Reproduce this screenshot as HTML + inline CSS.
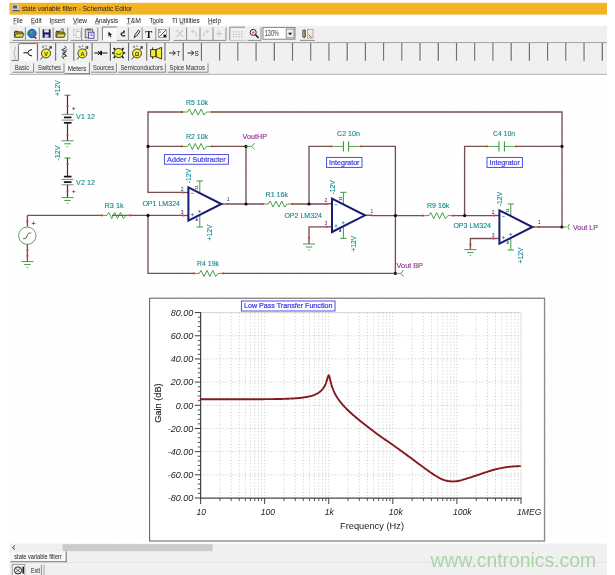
<!DOCTYPE html>
<html><head><meta charset="utf-8"><title>state variable filterr - Schematic Editor</title>
<style>
html,body{margin:0;padding:0;background:#fff;}
body{width:615px;height:575px;overflow:hidden;font-family:"Liberation Sans",sans-serif;}
svg{display:block;position:absolute;left:0;top:0;will-change:transform;transform:translateZ(0);filter:blur(0.35px);}
</style></head><body>
<svg width="615" height="575" viewBox="0 0 615 575" font-family="'Liberation Sans', sans-serif">
<g id="chrome">
<rect x="9.5" y="2.8" width="597.5" height="11.8" fill="#f4b325" stroke="none" stroke-width="1" />
<rect x="12" y="4.5" width="7" height="6.5" fill="#cfcfc4" stroke="none" stroke-width="1" />
<rect x="13" y="5.5" width="4" height="3" fill="#4a5a7a" stroke="none" stroke-width="1" />
<rect x="12.5" y="10" width="7" height="1.2" fill="#555" stroke="none" stroke-width="1" />
<text x="22" y="10.8" font-size="8" fill="#2a2210" stroke="#2a2210" stroke-width="0" textLength="110" lengthAdjust="spacingAndGlyphs">state variable filterr - Schematic Editor</text>
<text x="13.2" y="22.7" font-size="7.6" fill="#141414" stroke="#141414" stroke-width="0" textLength="9.8" lengthAdjust="spacingAndGlyphs">File</text>
<text x="31" y="22.7" font-size="7.6" fill="#141414" stroke="#141414" stroke-width="0" textLength="10.6" lengthAdjust="spacingAndGlyphs">Edit</text>
<text x="49.6" y="22.7" font-size="7.6" fill="#141414" stroke="#141414" stroke-width="0" textLength="15.4" lengthAdjust="spacingAndGlyphs">Insert</text>
<text x="73" y="22.7" font-size="7.6" fill="#141414" stroke="#141414" stroke-width="0" textLength="14" lengthAdjust="spacingAndGlyphs">View</text>
<text x="95" y="22.7" font-size="7.6" fill="#141414" stroke="#141414" stroke-width="0" textLength="23" lengthAdjust="spacingAndGlyphs">Analysis</text>
<text x="126.6" y="22.7" font-size="7.6" fill="#141414" stroke="#141414" stroke-width="0" textLength="14.4" lengthAdjust="spacingAndGlyphs">T&amp;M</text>
<text x="149.4" y="22.7" font-size="7.6" fill="#141414" stroke="#141414" stroke-width="0" textLength="14.2" lengthAdjust="spacingAndGlyphs">Tools</text>
<text x="172" y="22.7" font-size="7.6" fill="#141414" stroke="#141414" stroke-width="0" textLength="27.6" lengthAdjust="spacingAndGlyphs">TI Utilities</text>
<text x="208" y="22.7" font-size="7.6" fill="#141414" stroke="#141414" stroke-width="0" textLength="13" lengthAdjust="spacingAndGlyphs">Help</text>
<line x1="13.2" y1="23.9" x2="16.6" y2="23.9" stroke="#444" stroke-width="0.6" />
<line x1="31" y1="23.9" x2="35" y2="23.9" stroke="#444" stroke-width="0.6" />
<line x1="50.5" y1="23.9" x2="53.8" y2="23.9" stroke="#444" stroke-width="0.6" />
<line x1="73" y1="23.9" x2="77" y2="23.9" stroke="#444" stroke-width="0.6" />
<line x1="95" y1="23.9" x2="99.5" y2="23.9" stroke="#444" stroke-width="0.6" />
<line x1="126.6" y1="23.9" x2="130.6" y2="23.9" stroke="#444" stroke-width="0.6" />
<line x1="152.6" y1="23.9" x2="156.4" y2="23.9" stroke="#444" stroke-width="0.6" />
<line x1="180" y1="23.9" x2="184.6" y2="23.9" stroke="#444" stroke-width="0.6" />
<line x1="208" y1="23.9" x2="212.6" y2="23.9" stroke="#444" stroke-width="0.6" />
<rect x="9.5" y="25.8" width="597.5" height="16.8" fill="#f0f0f0" stroke="none" stroke-width="1" />
<rect x="9.5" y="42.4" width="597.5" height="32" fill="#f0f0f0" stroke="none" stroke-width="1" />
<line x1="9.5" y1="42.6" x2="607" y2="42.6" stroke="#a2a2a2" stroke-width="1" />
</g>
<g id="tb1">
<line x1="25.4" y1="27.5" x2="25.4" y2="40.4" stroke="#8c8c8c" stroke-width="1" />
<line x1="12.5" y1="40.4" x2="25.4" y2="40.4" stroke="#8c8c8c" stroke-width="1" />
<line x1="39.3" y1="27.5" x2="39.3" y2="40.4" stroke="#8c8c8c" stroke-width="1" />
<line x1="25.4" y1="40.4" x2="39.3" y2="40.4" stroke="#8c8c8c" stroke-width="1" />
<line x1="53.2" y1="27.5" x2="53.2" y2="40.4" stroke="#8c8c8c" stroke-width="1" />
<line x1="39.3" y1="40.4" x2="53.2" y2="40.4" stroke="#8c8c8c" stroke-width="1" />
<line x1="67.8" y1="27.5" x2="67.8" y2="40.4" stroke="#8c8c8c" stroke-width="1" />
<line x1="53.2" y1="40.4" x2="67.8" y2="40.4" stroke="#8c8c8c" stroke-width="1" />
<path d="M14.5,30.8 h3 l1,1 h4 v1 h-8z" fill="#6b5a10"/>
<path d="M14.5,32.0 h8.2 v5 h-8.2z" fill="#b8b038" stroke="#2a2a10" stroke-width="0.8"/>
<path d="M16.0,33.8 h8 l-1.5,3.4 h-8z" fill="#dcd860" stroke="#2a2a10" stroke-width="0.7"/>
<circle cx="32" cy="33.5" r="4.2" fill="#2a7ad0" stroke="#123a6a" stroke-width="0.8"/>
<path d="M29.5,31.5 q2,-1.5 3.5,0 q-0.5,2 -2.5,2.5z" fill="#3ab03a"/>
<path d="M33.5,36 l2.8,2.6" stroke="#c02020" stroke-width="1.6"/>
<rect x="42.6" y="29.4" width="8" height="8.4" fill="#18186a" stroke="none" stroke-width="1" />
<rect x="44.2" y="29.4" width="4.6" height="3" fill="#e8e8f4" stroke="none" stroke-width="1" />
<rect x="44.6" y="34.4" width="4" height="3.4" fill="#c8c8d8" stroke="none" stroke-width="1" />
<path d="M56,30.8 h3 l1,1 h4 v1 h-8z" fill="#6b5a10"/>
<path d="M56,32.0 h8.2 v5 h-8.2z" fill="#b8b038" stroke="#2a2a10" stroke-width="0.8"/>
<path d="M57.5,33.8 h8 l-1.5,3.4 h-8z" fill="#dcd860" stroke="#2a2a10" stroke-width="0.7"/>
<path d="M60,30.5 l3,-2 l0.5,2.5" fill="none" stroke="#333" stroke-width="0.7"/>
<line x1="81.7" y1="27.5" x2="81.7" y2="40.4" stroke="#8c8c8c" stroke-width="1" />
<line x1="70.5" y1="40.4" x2="81.7" y2="40.4" stroke="#8c8c8c" stroke-width="1" />
<line x1="97.8" y1="27.5" x2="97.8" y2="40.4" stroke="#8c8c8c" stroke-width="1" />
<line x1="81.7" y1="40.4" x2="97.8" y2="40.4" stroke="#8c8c8c" stroke-width="1" />
<rect x="73.5" y="29.5" width="4.5" height="6" fill="#f4f4f4" stroke="#bdbdbd" stroke-width="0.7" />
<rect x="76" y="31.5" width="4.5" height="6" fill="#f4f4f4" stroke="#bdbdbd" stroke-width="0.7" />
<rect x="85.2" y="29.2" width="7.5" height="8.6" fill="#d8d8c8" stroke="#555" stroke-width="0.8" />
<rect x="87" y="28.6" width="3.6" height="1.8" fill="#666" stroke="none" stroke-width="1" />
<rect x="88.6" y="32.2" width="5.4" height="6" fill="#fff" stroke="#2a2a9a" stroke-width="0.8" />
<line x1="89.8" y1="34" x2="92.8" y2="34" stroke="#2a2a9a" stroke-width="0.6" />
<line x1="89.8" y1="35.6" x2="92.8" y2="35.6" stroke="#2a2a9a" stroke-width="0.6" />
<rect x="102.4" y="27" width="14.199999999999989" height="13.4" fill="#f9f9f9" stroke="none" stroke-width="1" />
<path d="M102.4,40.4 V27 H116.6" fill="none" stroke="#7a7a7a" stroke-width="1"/>
<path d="M108.4,31.4 v5 l1.2,-1.1 l1,2.1 l0.8,-0.4 l-1,-2 h1.7z" fill="#111"/>
<line x1="128.4" y1="27.5" x2="128.4" y2="40.4" stroke="#8c8c8c" stroke-width="1" />
<line x1="116.6" y1="40.4" x2="128.4" y2="40.4" stroke="#8c8c8c" stroke-width="1" />
<line x1="142.2" y1="27.5" x2="142.2" y2="40.4" stroke="#8c8c8c" stroke-width="1" />
<line x1="128.4" y1="40.4" x2="142.2" y2="40.4" stroke="#8c8c8c" stroke-width="1" />
<line x1="155.8" y1="27.5" x2="155.8" y2="40.4" stroke="#8c8c8c" stroke-width="1" />
<line x1="142.2" y1="40.4" x2="155.8" y2="40.4" stroke="#8c8c8c" stroke-width="1" />
<line x1="169.4" y1="27.5" x2="169.4" y2="40.4" stroke="#8c8c8c" stroke-width="1" />
<line x1="155.8" y1="40.4" x2="169.4" y2="40.4" stroke="#8c8c8c" stroke-width="1" />
<path d="M124.8,30.8 l-1.6,1 M124.6,32.8 q-4,-0.4 -3.4,1.8 q0.8,2 4,1" fill="none" stroke="#111" stroke-width="1.2"/>
<path d="M134.2,37.6 l0.8,-2.8 l3.4,-4.6 l1.6,1.2 l-3.4,4.6z" fill="#fff" stroke="#111" stroke-width="0.9"/>
<text x="145.2" y="38" font-size="10.5" fill="#111" stroke="#111" stroke-width="0" font-weight="bold" font-family="Liberation Serif, serif">T</text>
<rect x="158.4" y="29.4" width="8.2" height="8.2" fill="#fdfdfd" stroke="#777" stroke-width="0.6" />
<line x1="159.4" y1="36.8" x2="165.8" y2="30.2" stroke="#222" stroke-width="0.8" />
<text x="158.8" y="33.4" font-size="4.2" fill="#111" stroke="#111" stroke-width="0">1</text>
<rect x="163.4" y="34.6" width="2.6" height="2.6" fill="#111" stroke="none" stroke-width="1" />
<line x1="186.6" y1="27.5" x2="186.6" y2="40.4" stroke="#8c8c8c" stroke-width="1" />
<line x1="173.5" y1="40.4" x2="186.6" y2="40.4" stroke="#8c8c8c" stroke-width="1" />
<line x1="200" y1="27.5" x2="200" y2="40.4" stroke="#8c8c8c" stroke-width="1" />
<line x1="186.6" y1="40.4" x2="200" y2="40.4" stroke="#8c8c8c" stroke-width="1" />
<line x1="213" y1="27.5" x2="213" y2="40.4" stroke="#8c8c8c" stroke-width="1" />
<line x1="200" y1="40.4" x2="213" y2="40.4" stroke="#8c8c8c" stroke-width="1" />
<line x1="226" y1="27.5" x2="226" y2="40.4" stroke="#8c8c8c" stroke-width="1" />
<line x1="213" y1="40.4" x2="226" y2="40.4" stroke="#8c8c8c" stroke-width="1" />
<path d="M176.5,30 l6.5,7 M183,30 l-6.5,7" stroke="#cfcfcf" stroke-width="1.3" fill="none"/>
<path d="M196.4,37 v-3 q-0.6,-3 -4.4,-2.6 M193.4,30 l-2,1.4 l2,1.6" stroke="#cacaca" stroke-width="1" fill="none"/>
<path d="M203.8,37 v-3 q0.6,-3 4.4,-2.6 M206.8,30 l2,1.4 l-2,1.6" stroke="#cacaca" stroke-width="1" fill="none"/>
<path d="M216,33.6 h6.4 M219.2,30.4 v6.4" stroke="#cacaca" stroke-width="1.1" fill="none"/>
<path d="M229.8,40.4 V27.2 H245" fill="none" stroke="#8a8a8a" stroke-width="1"/>
<line x1="229.8" y1="40.4" x2="246" y2="40.4" stroke="#b8b8b8" stroke-width="0.8" />
<rect x="233" y="31.4" width="1" height="1" fill="#9a9a9a" stroke="none" stroke-width="1" />
<rect x="233" y="33.8" width="1" height="1" fill="#9a9a9a" stroke="none" stroke-width="1" />
<rect x="233" y="36.2" width="1" height="1" fill="#9a9a9a" stroke="none" stroke-width="1" />
<rect x="235.8" y="31.4" width="1" height="1" fill="#9a9a9a" stroke="none" stroke-width="1" />
<rect x="235.8" y="33.8" width="1" height="1" fill="#9a9a9a" stroke="none" stroke-width="1" />
<rect x="235.8" y="36.2" width="1" height="1" fill="#9a9a9a" stroke="none" stroke-width="1" />
<rect x="238.6" y="31.4" width="1" height="1" fill="#9a9a9a" stroke="none" stroke-width="1" />
<rect x="238.6" y="33.8" width="1" height="1" fill="#9a9a9a" stroke="none" stroke-width="1" />
<rect x="238.6" y="36.2" width="1" height="1" fill="#9a9a9a" stroke="none" stroke-width="1" />
<rect x="241.4" y="31.4" width="1" height="1" fill="#9a9a9a" stroke="none" stroke-width="1" />
<rect x="241.4" y="33.8" width="1" height="1" fill="#9a9a9a" stroke="none" stroke-width="1" />
<rect x="241.4" y="36.2" width="1" height="1" fill="#9a9a9a" stroke="none" stroke-width="1" />
<line x1="261" y1="27.5" x2="261" y2="40.4" stroke="#8c8c8c" stroke-width="1" />
<line x1="247.5" y1="40.4" x2="261" y2="40.4" stroke="#8c8c8c" stroke-width="1" />
<circle cx="253.2" cy="32.4" r="3" fill="#fff" stroke="#222" stroke-width="1"/>
<circle cx="253.2" cy="32.4" r="1.2" fill="#e0407a"/>
<line x1="255.4" y1="34.6" x2="258.6" y2="38" stroke="#222" stroke-width="1.6" />
<rect x="263" y="27.4" width="32" height="11.8" fill="#fff" stroke="#7a7a7a" stroke-width="0.9" />
<text x="264.8" y="36.4" font-size="8.2" fill="#3a3a3a" stroke="#3a3a3a" stroke-width="0" textLength="14" lengthAdjust="spacingAndGlyphs">130%</text>
<rect x="286.2" y="29" width="7.8" height="9" fill="#ececec" stroke="#777" stroke-width="0.8" />
<path d="M288.1,32.8 h4 l-2,2.4z" fill="#111"/>
<rect x="302.8" y="30.4" width="2.8" height="6.6" fill="#d0d060" stroke="#444" stroke-width="0.7" />
<line x1="304.2" y1="29" x2="304.2" y2="38.6" stroke="#444" stroke-width="0.7" />
<rect x="307.4" y="29.4" width="5.6" height="8.6" fill="#ececec" stroke="#888" stroke-width="0.6" />
<path d="M308.6,34.6 l3,3" stroke="#c03030" stroke-width="0.9"/>
<line x1="300" y1="40.4" x2="315" y2="40.4" stroke="#8c8c8c" stroke-width="1" />
</g>
<g id="tb2">
<path d="M15.4,46.5 q-2.6,6.5 0,13" fill="none" stroke="#b0b0b0" stroke-width="0.9"/>
<rect x="19" y="43.4" width="18" height="17.4" fill="#fbfbfb" stroke="none" stroke-width="1" />
<path d="M11.6,60.4 h6.8 V45.6 q0,-2 2,-2 h16" fill="none" stroke="#707070" stroke-width="1"/>
<line x1="37.52" y1="43" x2="37.52" y2="60.8" stroke="#6e6e6e" stroke-width="1.3" />
<line x1="38.62" y1="43.6" x2="38.62" y2="60.8" stroke="#fafafa" stroke-width="0.7" />
<line x1="55.74" y1="43" x2="55.74" y2="60.8" stroke="#6e6e6e" stroke-width="1.3" />
<line x1="56.84" y1="43.6" x2="56.84" y2="60.8" stroke="#fafafa" stroke-width="0.7" />
<line x1="73.96" y1="43" x2="73.96" y2="60.8" stroke="#6e6e6e" stroke-width="1.3" />
<line x1="75.06" y1="43.6" x2="75.06" y2="60.8" stroke="#fafafa" stroke-width="0.7" />
<line x1="92.18" y1="43" x2="92.18" y2="60.8" stroke="#6e6e6e" stroke-width="1.3" />
<line x1="93.28" y1="43.6" x2="93.28" y2="60.8" stroke="#fafafa" stroke-width="0.7" />
<line x1="110.4" y1="43" x2="110.4" y2="60.8" stroke="#6e6e6e" stroke-width="1.3" />
<line x1="111.5" y1="43.6" x2="111.5" y2="60.8" stroke="#fafafa" stroke-width="0.7" />
<line x1="128.62" y1="43" x2="128.62" y2="60.8" stroke="#6e6e6e" stroke-width="1.3" />
<line x1="129.72" y1="43.6" x2="129.72" y2="60.8" stroke="#fafafa" stroke-width="0.7" />
<line x1="146.84" y1="43" x2="146.84" y2="60.8" stroke="#6e6e6e" stroke-width="1.3" />
<line x1="147.94" y1="43.6" x2="147.94" y2="60.8" stroke="#fafafa" stroke-width="0.7" />
<line x1="165.06" y1="43" x2="165.06" y2="60.8" stroke="#6e6e6e" stroke-width="1.3" />
<line x1="166.16" y1="43.6" x2="166.16" y2="60.8" stroke="#fafafa" stroke-width="0.7" />
<line x1="183.28" y1="43" x2="183.28" y2="60.8" stroke="#6e6e6e" stroke-width="1.3" />
<line x1="184.38" y1="43.6" x2="184.38" y2="60.8" stroke="#fafafa" stroke-width="0.7" />
<line x1="201.5" y1="43" x2="201.5" y2="60.8" stroke="#6e6e6e" stroke-width="1.3" />
<line x1="202.6" y1="43.6" x2="202.6" y2="60.8" stroke="#fafafa" stroke-width="0.7" />
<line x1="219.72" y1="43" x2="219.72" y2="60.8" stroke="#6e6e6e" stroke-width="1.3" />
<line x1="220.82" y1="43.6" x2="220.82" y2="60.8" stroke="#fafafa" stroke-width="0.7" />
<line x1="237.94" y1="43" x2="237.94" y2="60.8" stroke="#6e6e6e" stroke-width="1.3" />
<line x1="239.04" y1="43.6" x2="239.04" y2="60.8" stroke="#fafafa" stroke-width="0.7" />
<line x1="256.16" y1="43" x2="256.16" y2="60.8" stroke="#6e6e6e" stroke-width="1.3" />
<line x1="257.26" y1="43.6" x2="257.26" y2="60.8" stroke="#fafafa" stroke-width="0.7" />
<line x1="274.38" y1="43" x2="274.38" y2="60.8" stroke="#6e6e6e" stroke-width="1.3" />
<line x1="275.48" y1="43.6" x2="275.48" y2="60.8" stroke="#fafafa" stroke-width="0.7" />
<line x1="292.6" y1="43" x2="292.6" y2="60.8" stroke="#6e6e6e" stroke-width="1.3" />
<line x1="293.7" y1="43.6" x2="293.7" y2="60.8" stroke="#fafafa" stroke-width="0.7" />
<line x1="310.82" y1="43" x2="310.82" y2="60.8" stroke="#6e6e6e" stroke-width="1.3" />
<line x1="311.92" y1="43.6" x2="311.92" y2="60.8" stroke="#fafafa" stroke-width="0.7" />
<line x1="329.04" y1="43" x2="329.04" y2="60.8" stroke="#6e6e6e" stroke-width="1.3" />
<line x1="330.14" y1="43.6" x2="330.14" y2="60.8" stroke="#fafafa" stroke-width="0.7" />
<line x1="347.26" y1="43" x2="347.26" y2="60.8" stroke="#6e6e6e" stroke-width="1.3" />
<line x1="348.36" y1="43.6" x2="348.36" y2="60.8" stroke="#fafafa" stroke-width="0.7" />
<line x1="365.48" y1="43" x2="365.48" y2="60.8" stroke="#6e6e6e" stroke-width="1.3" />
<line x1="366.58" y1="43.6" x2="366.58" y2="60.8" stroke="#fafafa" stroke-width="0.7" />
<line x1="383.7" y1="43" x2="383.7" y2="60.8" stroke="#6e6e6e" stroke-width="1.3" />
<line x1="384.8" y1="43.6" x2="384.8" y2="60.8" stroke="#fafafa" stroke-width="0.7" />
<line x1="401.92" y1="43" x2="401.92" y2="60.8" stroke="#6e6e6e" stroke-width="1.3" />
<line x1="403.02" y1="43.6" x2="403.02" y2="60.8" stroke="#fafafa" stroke-width="0.7" />
<line x1="420.14" y1="43" x2="420.14" y2="60.8" stroke="#6e6e6e" stroke-width="1.3" />
<line x1="421.24" y1="43.6" x2="421.24" y2="60.8" stroke="#fafafa" stroke-width="0.7" />
<line x1="438.36" y1="43" x2="438.36" y2="60.8" stroke="#6e6e6e" stroke-width="1.3" />
<line x1="439.46" y1="43.6" x2="439.46" y2="60.8" stroke="#fafafa" stroke-width="0.7" />
<line x1="456.58" y1="43" x2="456.58" y2="60.8" stroke="#6e6e6e" stroke-width="1.3" />
<line x1="457.68" y1="43.6" x2="457.68" y2="60.8" stroke="#fafafa" stroke-width="0.7" />
<line x1="474.8" y1="43" x2="474.8" y2="60.8" stroke="#6e6e6e" stroke-width="1.3" />
<line x1="475.9" y1="43.6" x2="475.9" y2="60.8" stroke="#fafafa" stroke-width="0.7" />
<line x1="493.02" y1="43" x2="493.02" y2="60.8" stroke="#6e6e6e" stroke-width="1.3" />
<line x1="494.12" y1="43.6" x2="494.12" y2="60.8" stroke="#fafafa" stroke-width="0.7" />
<line x1="511.24" y1="43" x2="511.24" y2="60.8" stroke="#6e6e6e" stroke-width="1.3" />
<line x1="512.34" y1="43.6" x2="512.34" y2="60.8" stroke="#fafafa" stroke-width="0.7" />
<line x1="529.46" y1="43" x2="529.46" y2="60.8" stroke="#6e6e6e" stroke-width="1.3" />
<line x1="530.56" y1="43.6" x2="530.56" y2="60.8" stroke="#fafafa" stroke-width="0.7" />
<line x1="547.68" y1="43" x2="547.68" y2="60.8" stroke="#6e6e6e" stroke-width="1.3" />
<line x1="548.78" y1="43.6" x2="548.78" y2="60.8" stroke="#fafafa" stroke-width="0.7" />
<line x1="565.9" y1="43" x2="565.9" y2="60.8" stroke="#6e6e6e" stroke-width="1.3" />
<line x1="567.0" y1="43.6" x2="567.0" y2="60.8" stroke="#fafafa" stroke-width="0.7" />
<line x1="584.12" y1="43" x2="584.12" y2="60.8" stroke="#6e6e6e" stroke-width="1.3" />
<line x1="585.22" y1="43.6" x2="585.22" y2="60.8" stroke="#fafafa" stroke-width="0.7" />
<line x1="602.34" y1="43" x2="602.34" y2="60.8" stroke="#6e6e6e" stroke-width="1.3" />
<line x1="603.44" y1="43.6" x2="603.44" y2="60.8" stroke="#fafafa" stroke-width="0.7" />
<path d="M23.4,52.8 h4.4 M32,49.6 q-4,0.4 -4.2,3.2 q0.2,2.8 4.2,3.2" fill="none" stroke="#111" stroke-width="1"/>
<path d="M40.6,59.4 l10.6,-12.6" stroke="#222" stroke-width="0.9" fill="none"/>
<circle cx="46" cy="53.4" r="4.5" fill="#f2ee2a" stroke="#333" stroke-width="0.9"/>
<path d="M51.4,46.6 l-2.4,0.4 M51.4,46.6 l-0.2,2.4" stroke="#222" stroke-width="0.8" fill="none"/>
<path d="M42.4,46 l1.6,1.6 M44,46 l-1.6,1.6 M46,46.8 v-1.6" stroke="#222" stroke-width="0.6"/>
<text x="46" y="55.6" font-size="5.6" fill="#333" stroke="#333" stroke-width="0" text-anchor="middle" font-weight="bold">V</text>
<path d="M64.3,46 l2,1.6 l-4,2 l4,2 l-4,2 l4,2 l-4,2 l2,1.6" fill="none" stroke="#222" stroke-width="0.8"/>
<path d="M61.6,49 l5.4,8 M67,49 l-5.4,8" stroke="#222" stroke-width="0.6"/>
<path d="M77.0,59.4 l10.6,-12.6" stroke="#222" stroke-width="0.9" fill="none"/>
<circle cx="82.4" cy="53.4" r="4.5" fill="#f2ee2a" stroke="#333" stroke-width="0.9"/>
<path d="M87.80000000000001,46.6 l-2.4,0.4 M87.80000000000001,46.6 l-0.2,2.4" stroke="#222" stroke-width="0.8" fill="none"/>
<path d="M78.80000000000001,46 l1.6,1.6 M80.4,46 l-1.6,1.6 M82.4,46.8 v-1.6" stroke="#222" stroke-width="0.6"/>
<text x="82.4" y="55.6" font-size="5.6" fill="#333" stroke="#333" stroke-width="0" text-anchor="middle" font-weight="bold">A</text>
<path d="M94.4,53 h13 M98,51.2 l2.2,1.8 l-2.2,1.8" fill="none" stroke="#111" stroke-width="1"/>
<rect x="100.2" y="50.8" width="1.8" height="4.4" fill="#111"/>
<circle cx="118.6" cy="53" r="4.6" fill="#f2ee2a" stroke="#222" stroke-width="0.9"/>
<path d="M112,53 h2 M123.2,53 h2 M113.6,48 l1.6,1.6 M123.6,48 l-1.6,1.6 M113.6,58 l1.6,-1.6 M123.6,58 l-1.6,-1.6" stroke="#111" stroke-width="1.5"/>
<path d="M116,53.4 q2.6,2.4 5.2,0" fill="none" stroke="#2a8a2a" stroke-width="1.1"/>
<path d="M131.6,59.4 l10.6,-12.6" stroke="#222" stroke-width="0.9" fill="none"/>
<circle cx="137" cy="53.4" r="4.5" fill="#f2ee2a" stroke="#333" stroke-width="0.9"/>
<path d="M142.4,46.6 l-2.4,0.4 M142.4,46.6 l-0.2,2.4" stroke="#222" stroke-width="0.8" fill="none"/>
<path d="M133.4,46 l1.6,1.6 M135,46 l-1.6,1.6 M137,46.8 v-1.6" stroke="#222" stroke-width="0.6"/>
<text x="137" y="55.6" font-size="5.6" fill="#333" stroke="#333" stroke-width="0" text-anchor="middle" font-weight="bold">&#937;</text>
<path d="M150.6,49.6 h5.4 v7.2 h-5.4z M156,49.6 l5.6,-2.2 v11.6 l-5.6,-2.2z" fill="#f2ee2a" stroke="#222" stroke-width="0.9"/>
<path d="M152.6,47.4 v2.2 M152.6,56.8 v2.2" stroke="#222" stroke-width="0.9"/>
<path d="M169.2,53 h6 M172.8,50.6 l2.6,2.4 l-2.6,2.4" fill="none" stroke="#111" stroke-width="0.9"/>
<text x="176.4" y="55.6" font-size="6.4" fill="#111" stroke="#111" stroke-width="0">T</text>
<path d="M187.6,53 h6 M191.2,50.6 l2.6,2.4 l-2.6,2.4" fill="none" stroke="#111" stroke-width="0.9"/>
<text x="194.6" y="55.6" font-size="6.4" fill="#111" stroke="#111" stroke-width="0">S</text>
</g>
<g id="tabs">
<line x1="33.6" y1="63.4" x2="33.6" y2="72" stroke="#8a8a8a" stroke-width="1" />
<line x1="12.4" y1="72.2" x2="34.1" y2="72.2" stroke="#8a8a8a" stroke-width="1" />
<text x="15" y="70" font-size="7" fill="#2a2a2a" stroke="#2a2a2a" stroke-width="0" textLength="14" lengthAdjust="spacingAndGlyphs">Basic</text>
<line x1="64" y1="63.4" x2="64" y2="72" stroke="#8a8a8a" stroke-width="1" />
<line x1="35.4" y1="72.2" x2="64.5" y2="72.2" stroke="#8a8a8a" stroke-width="1" />
<text x="38" y="70" font-size="7" fill="#2a2a2a" stroke="#2a2a2a" stroke-width="0" textLength="23" lengthAdjust="spacingAndGlyphs">Switches</text>
<line x1="116.4" y1="63.4" x2="116.4" y2="72" stroke="#8a8a8a" stroke-width="1" />
<line x1="91" y1="72.2" x2="116.9" y2="72.2" stroke="#8a8a8a" stroke-width="1" />
<text x="93" y="70" font-size="7" fill="#2a2a2a" stroke="#2a2a2a" stroke-width="0" textLength="21" lengthAdjust="spacingAndGlyphs">Sources</text>
<line x1="165.4" y1="63.4" x2="165.4" y2="72" stroke="#8a8a8a" stroke-width="1" />
<line x1="118" y1="72.2" x2="165.9" y2="72.2" stroke="#8a8a8a" stroke-width="1" />
<text x="120.4" y="70" font-size="7" fill="#2a2a2a" stroke="#2a2a2a" stroke-width="0" textLength="42.6" lengthAdjust="spacingAndGlyphs">Semiconductors</text>
<line x1="208" y1="63.4" x2="208" y2="72" stroke="#8a8a8a" stroke-width="1" />
<line x1="167.6" y1="72.2" x2="208.5" y2="72.2" stroke="#8a8a8a" stroke-width="1" />
<text x="169.6" y="70" font-size="7" fill="#2a2a2a" stroke="#2a2a2a" stroke-width="0" textLength="35.4" lengthAdjust="spacingAndGlyphs">Spice Macros</text>
<rect x="65" y="62.4" width="24.4" height="11.4" fill="#f6f6f6" stroke="none" stroke-width="1" />
<line x1="89.4" y1="62.4" x2="89.4" y2="73.6" stroke="#7a7a7a" stroke-width="1" />
<line x1="64.6" y1="73.6" x2="89.9" y2="73.6" stroke="#7a7a7a" stroke-width="1" />
<text x="68" y="71.2" font-size="7" fill="#1a1a1a" stroke="#1a1a1a" stroke-width="0" textLength="18.2" lengthAdjust="spacingAndGlyphs">Meters</text>
<rect x="9.5" y="74.4" width="597.5" height="469.2" fill="#fff" stroke="none" stroke-width="1" />
<line x1="9.5" y1="74.4" x2="607" y2="74.4" stroke="#a8a8a8" stroke-width="0.9" />
</g>
<g id="circuit">
<defs><pattern id="gd" x="3.9" y="2.15" width="5.75" height="5.75" patternUnits="userSpaceOnUse"><rect x="0" y="0" width="1" height="1" fill="#f6f6f6"/></pattern></defs>
<rect x="12" y="78" width="593" height="464" fill="url(#gd)" stroke="none" stroke-width="1" />
<text transform="translate(59.6,96) rotate(-90)" font-size="7" fill="#17888c" stroke="#17888c" stroke-width="0.12" textLength="15.6" lengthAdjust="spacingAndGlyphs">+12V</text>
<line x1="64.3" y1="95.2" x2="70.7" y2="95.2" stroke="#3d9a3d" stroke-width="1" />
<line x1="67.5" y1="95.2" x2="67.5" y2="114.4" stroke="#3e3434" stroke-width="1.2" />
<rect x="66.6" y="105.3" width="1.8" height="1.8" fill="#e8302a"/>
<line x1="61.5" y1="114.4" x2="73.5" y2="114.4" stroke="#777" stroke-width="0.9" />
<line x1="63.9" y1="117.4" x2="71.5" y2="117.4" stroke="#111" stroke-width="1.7" />
<line x1="61.5" y1="120.10000000000001" x2="73.5" y2="120.10000000000001" stroke="#777" stroke-width="0.9" />
<line x1="63.9" y1="122.80000000000001" x2="71.5" y2="122.80000000000001" stroke="#111" stroke-width="1.7" />
<line x1="67.5" y1="122.80000000000001" x2="67.5" y2="140.8" stroke="#3e3434" stroke-width="1.2" />
<rect x="66.6" y="134.29999999999998" width="1.8" height="1.8" fill="#e8302a"/>
<line x1="61.5" y1="140.8" x2="73.5" y2="140.8" stroke="#5f8f5f" stroke-width="1" />
<line x1="64.3" y1="143.8" x2="70.7" y2="143.8" stroke="#3d9a3d" stroke-width="1" />
<line x1="66.7" y1="146.8" x2="68.3" y2="146.8" stroke="#3d9a3d" stroke-width="0.8" />
<text x="71.9" y="109.60000000000001" font-size="6" fill="#222" stroke="#222" stroke-width="0" font-weight="bold">+</text>
<text x="76.1" y="119.2" font-size="7.6" fill="#17888c" stroke="#17888c" stroke-width="0.12" textLength="18.8" lengthAdjust="spacingAndGlyphs">V1 12</text>
<text transform="translate(59.6,160.6) rotate(-90)" font-size="7" fill="#17888c" stroke="#17888c" stroke-width="0.12" textLength="15" lengthAdjust="spacingAndGlyphs">-12V</text>
<line x1="64.3" y1="158" x2="70.7" y2="158" stroke="#3d9a3d" stroke-width="1" />
<line x1="67.5" y1="158" x2="67.5" y2="176.6" stroke="#3e3434" stroke-width="1.2" />
<rect x="66.6" y="163.1" width="1.8" height="1.8" fill="#e8302a"/>
<line x1="63.9" y1="176.6" x2="71.5" y2="176.6" stroke="#111" stroke-width="1.7" />
<line x1="61.5" y1="179.4" x2="73.5" y2="179.4" stroke="#777" stroke-width="0.9" />
<line x1="63.9" y1="182.1" x2="71.5" y2="182.1" stroke="#111" stroke-width="1.7" />
<line x1="61.5" y1="184.79999999999998" x2="73.5" y2="184.79999999999998" stroke="#777" stroke-width="0.9" />
<line x1="67.5" y1="184.79999999999998" x2="67.5" y2="197.6" stroke="#3e3434" stroke-width="1.2" />
<rect x="66.6" y="190.5" width="1.8" height="1.8" fill="#e8302a"/>
<line x1="61.5" y1="197.6" x2="73.5" y2="197.6" stroke="#5f8f5f" stroke-width="1" />
<line x1="64.3" y1="200.6" x2="70.7" y2="200.6" stroke="#3d9a3d" stroke-width="1" />
<line x1="66.7" y1="203.6" x2="68.3" y2="203.6" stroke="#3d9a3d" stroke-width="0.8" />
<text x="71.9" y="193" font-size="6" fill="#222" stroke="#222" stroke-width="0" font-weight="bold">+</text>
<text x="76.1" y="184.6" font-size="7.6" fill="#17888c" stroke="#17888c" stroke-width="0.12" textLength="18.8" lengthAdjust="spacingAndGlyphs">V2 12</text>
<line x1="27.4" y1="215.4" x2="27.4" y2="226.6" stroke="#755050" stroke-width="1.35" />
<rect x="26.5" y="220.5" width="1.8" height="1.8" fill="#e8302a"/>
<circle cx="27.3" cy="235.7" r="8.7" fill="none" stroke="#5a9a5a" stroke-width="0.95"/>
<path d="M23.2,238.6 h1.8 q1.2,0 1.7,-1.6 l0.9,-2.4 q0.5,-1.5 1.7,-1.5 h1.9" fill="none" stroke="#4a4a4a" stroke-width="0.9"/>
<text x="31.5" y="225.8" font-size="7" fill="#17888c" stroke="#17888c" stroke-width="0" font-weight="bold">+</text>
<line x1="27.4" y1="244.4" x2="27.4" y2="261.6" stroke="#755050" stroke-width="1.35" />
<rect x="26.5" y="249.1" width="1.8" height="1.8" fill="#e8302a"/>
<rect x="26.5" y="254.7" width="1.8" height="1.8" fill="#e8302a"/>
<line x1="21.4" y1="261.6" x2="33.4" y2="261.6" stroke="#5f8f5f" stroke-width="1" />
<line x1="24.2" y1="264.6" x2="30.599999999999998" y2="264.6" stroke="#3d9a3d" stroke-width="1" />
<line x1="26.599999999999998" y1="267.6" x2="28.2" y2="267.6" stroke="#3d9a3d" stroke-width="0.8" />
<polyline points="27.4,215.4 102,215.4" fill="none" stroke="#755050" stroke-width="1.35" />
<polyline points="112,215.4 183,215.4" fill="none" stroke="#755050" stroke-width="1.35" />
<rect x="101.1" y="214.5" width="1.8" height="1.8" fill="#e8302a"/>
<rect x="129.5" y="214.5" width="1.8" height="1.8" fill="#e8302a"/>
<polyline points="103,215.4 106.9,215.4 108.8,212.4 111.72,218.5 114.64,212.4 117.56,218.5 120.48,212.4 123.4,218.5 125.9,215.4 129.4,215.4" fill="none" stroke="#3d9a3d" stroke-width="0.95" stroke-linejoin="round"/>
<text x="104.6" y="207.9" font-size="7.3" fill="#17888c" stroke="#17888c" stroke-width="0.12" textLength="19" lengthAdjust="spacingAndGlyphs">R3 1k</text>
<polyline points="183,192.4 148,192.4 148,112 183,112" fill="none" stroke="#755050" stroke-width="1.35" />
<polyline points="211.6,112 562,112 562,227 539,227" fill="none" stroke="#755050" stroke-width="1.35" />
<rect x="181.1" y="111.1" width="1.8" height="1.8" fill="#e8302a"/>
<rect x="210.7" y="111.1" width="1.8" height="1.8" fill="#e8302a"/>
<polyline points="183,112 187.5,112 189.4,109.0 192.32,115.1 195.24,109.0 198.16,115.1 201.08,109.0 204.0,115.1 206.5,112 210.6,112" fill="none" stroke="#3d9a3d" stroke-width="0.95" stroke-linejoin="round"/>
<text x="186" y="104.5" font-size="7.3" fill="#17888c" stroke="#17888c" stroke-width="0.12" textLength="22" lengthAdjust="spacingAndGlyphs">R5 10k</text>
<polyline points="148,146.4 182,146.4" fill="none" stroke="#755050" stroke-width="1.35" />
<polyline points="211.6,146.4 246,146.4 246,204" fill="none" stroke="#755050" stroke-width="1.35" />
<rect x="181.1" y="145.5" width="1.8" height="1.8" fill="#e8302a"/>
<rect x="210.7" y="145.5" width="1.8" height="1.8" fill="#e8302a"/>
<polyline points="183,146.4 187.5,146.4 189.4,143.4 192.32,149.5 195.24,143.4 198.16,149.5 201.08,143.4 204.0,149.5 206.5,146.4 210.6,146.4" fill="none" stroke="#3d9a3d" stroke-width="0.95" stroke-linejoin="round"/>
<text x="186" y="138.9" font-size="7.3" fill="#17888c" stroke="#17888c" stroke-width="0.12" textLength="22" lengthAdjust="spacingAndGlyphs">R2 10k</text>
<polyline points="148,215.4 148,273.4 194,273.4" fill="none" stroke="#755050" stroke-width="1.35" />
<polyline points="223,273.4 395.4,273.4 395.4,146.4 361,146.4" fill="none" stroke="#755050" stroke-width="1.35" />
<rect x="193.1" y="272.5" width="1.8" height="1.8" fill="#e8302a"/>
<rect x="222.1" y="272.5" width="1.8" height="1.8" fill="#e8302a"/>
<polyline points="195,273.4 199.2,273.4 201.1,270.4 204.02,276.5 206.94,270.4 209.86,276.5 212.78,270.4 215.7,276.5 218.2,273.4 222,273.4" fill="none" stroke="#3d9a3d" stroke-width="0.95" stroke-linejoin="round"/>
<text x="197" y="265.9" font-size="7.3" fill="#17888c" stroke="#17888c" stroke-width="0.12" textLength="22" lengthAdjust="spacingAndGlyphs">R4 19k</text>
<polyline points="228.4,204 263,204" fill="none" stroke="#755050" stroke-width="1.35" />
<polyline points="292,204 326.6,204" fill="none" stroke="#755050" stroke-width="1.35" />
<rect x="262.1" y="203.1" width="1.8" height="1.8" fill="#e8302a"/>
<rect x="291.1" y="203.1" width="1.8" height="1.8" fill="#e8302a"/>
<polyline points="264,204 268.2,204 270.1,201.0 273.02,207.1 275.94,201.0 278.86,207.1 281.78,201.0 284.7,207.1 287.2,204 291,204" fill="none" stroke="#3d9a3d" stroke-width="0.95" stroke-linejoin="round"/>
<text x="265.6" y="196.5" font-size="7.3" fill="#17888c" stroke="#17888c" stroke-width="0.12" textLength="22.4" lengthAdjust="spacingAndGlyphs">R1 16k</text>
<polyline points="309,204 309,146.4 331.6,146.4" fill="none" stroke="#755050" stroke-width="1.35" />
<rect x="330.70000000000005" y="145.5" width="1.8" height="1.8" fill="#e8302a"/>
<rect x="360.1" y="145.5" width="1.8" height="1.8" fill="#e8302a"/>
<line x1="332.6" y1="146.4" x2="343.4" y2="146.4" stroke="#3d9a3d" stroke-width="0.9" />
<line x1="348.6" y1="146.4" x2="360" y2="146.4" stroke="#3d9a3d" stroke-width="0.9" />
<line x1="343.4" y1="141.20000000000002" x2="343.4" y2="151.6" stroke="#3d9a3d" stroke-width="1.1" />
<line x1="348.6" y1="141.20000000000002" x2="348.6" y2="151.6" stroke="#3d9a3d" stroke-width="1.1" />
<text x="337" y="136.1" font-size="7.3" fill="#17888c" stroke="#17888c" stroke-width="0.12" textLength="23" lengthAdjust="spacingAndGlyphs">C2 10n</text>
<polyline points="326.6,226.8 309,226.8 309,244" fill="none" stroke="#755050" stroke-width="1.35" />
<rect x="308.1" y="237.1" width="1.8" height="1.8" fill="#e8302a"/>
<line x1="303" y1="244" x2="315" y2="244" stroke="#5f8f5f" stroke-width="1" />
<line x1="305.8" y1="247" x2="312.2" y2="247" stroke="#3d9a3d" stroke-width="1" />
<line x1="308.2" y1="250" x2="309.8" y2="250" stroke="#3d9a3d" stroke-width="0.8" />
<polyline points="372,215.6 423.4,215.6" fill="none" stroke="#755050" stroke-width="1.35" />
<polyline points="453,215.6 494,215.6" fill="none" stroke="#755050" stroke-width="1.35" />
<rect x="422.5" y="214.7" width="1.8" height="1.8" fill="#e8302a"/>
<rect x="452.1" y="214.7" width="1.8" height="1.8" fill="#e8302a"/>
<polyline points="424.4,215.6 428.9,215.6 430.8,212.6 433.72,218.7 436.64,212.6 439.56,218.7 442.48,212.6 445.4,218.7 447.9,215.6 452,215.6" fill="none" stroke="#3d9a3d" stroke-width="0.95" stroke-linejoin="round"/>
<text x="427" y="208.1" font-size="7.3" fill="#17888c" stroke="#17888c" stroke-width="0.12" textLength="22.4" lengthAdjust="spacingAndGlyphs">R9 16k</text>
<polyline points="464.6,215.6 464.6,146.4 487,146.4" fill="none" stroke="#755050" stroke-width="1.35" />
<polyline points="516,146.4 562,146.4" fill="none" stroke="#755050" stroke-width="1.35" />
<rect x="486.1" y="145.5" width="1.8" height="1.8" fill="#e8302a"/>
<rect x="515.1" y="145.5" width="1.8" height="1.8" fill="#e8302a"/>
<line x1="488" y1="146.4" x2="499" y2="146.4" stroke="#3d9a3d" stroke-width="0.9" />
<line x1="504.4" y1="146.4" x2="515" y2="146.4" stroke="#3d9a3d" stroke-width="0.9" />
<line x1="499" y1="141.20000000000002" x2="499" y2="151.6" stroke="#3d9a3d" stroke-width="1.1" />
<line x1="504.4" y1="141.20000000000002" x2="504.4" y2="151.6" stroke="#3d9a3d" stroke-width="1.1" />
<text x="493" y="136.1" font-size="7.3" fill="#17888c" stroke="#17888c" stroke-width="0.12" textLength="22" lengthAdjust="spacingAndGlyphs">C4 10n</text>
<polyline points="494,238.5 470.4,238.5 470.4,249.6" fill="none" stroke="#755050" stroke-width="1.35" />
<rect x="469.5" y="243.7" width="1.8" height="1.8" fill="#e8302a"/>
<line x1="464.4" y1="249.6" x2="476.4" y2="249.6" stroke="#5f8f5f" stroke-width="1" />
<line x1="467.2" y1="252.6" x2="473.59999999999997" y2="252.6" stroke="#3d9a3d" stroke-width="1" />
<line x1="469.59999999999997" y1="255.6" x2="471.2" y2="255.6" stroke="#3d9a3d" stroke-width="0.8" />
<line x1="199.8" y1="181" x2="199.8" y2="193" stroke="#3d9a3d" stroke-width="1" />
<line x1="196.60000000000002" y1="181" x2="203.0" y2="181" stroke="#3d9a3d" stroke-width="1" />
<line x1="199.8" y1="215" x2="199.8" y2="227" stroke="#3d9a3d" stroke-width="1" />
<line x1="196.60000000000002" y1="227" x2="203.0" y2="227" stroke="#3d9a3d" stroke-width="1" />
<line x1="183.4" y1="192.5" x2="188.4" y2="192.5" stroke="#755050" stroke-width="1.35" />
<line x1="183.4" y1="215.5" x2="188.4" y2="215.5" stroke="#755050" stroke-width="1.35" />
<rect x="182.1" y="191.6" width="1.8" height="1.8" fill="#e8302a"/>
<rect x="182.1" y="214.6" width="1.8" height="1.8" fill="#e8302a"/>
<line x1="221.4" y1="204" x2="228.0" y2="204" stroke="#755050" stroke-width="1.35" />
<rect x="226.9" y="203.1" width="1.8" height="1.8" fill="#e8302a"/>
<polygon points="188.4,187.3 188.4,220.7 221.4,204" fill="#fff" stroke="#1b1b73" stroke-width="2" stroke-linejoin="miter"/>
<line x1="191.0" y1="193.4" x2="193.8" y2="193.4" stroke="#3a8aa0" stroke-width="0.8" />
<line x1="190.8" y1="214.6" x2="194.0" y2="214.6" stroke="#3a8aa0" stroke-width="0.8" />
<line x1="192.4" y1="213" x2="192.4" y2="216.2" stroke="#3a8aa0" stroke-width="0.8" />
<line x1="198.0" y1="211.4" x2="201.20000000000002" y2="211.4" stroke="#3a8aa0" stroke-width="0.8" />
<line x1="199.6" y1="209.8" x2="199.6" y2="213" stroke="#3a8aa0" stroke-width="0.8" />
<text x="180.8" y="190.8" font-size="5" fill="#24249a" stroke="#24249a" stroke-width="0">2</text>
<text x="180.8" y="213.8" font-size="5" fill="#24249a" stroke="#24249a" stroke-width="0">3</text>
<text x="226.8" y="201.4" font-size="5" fill="#24249a" stroke="#24249a" stroke-width="0">1</text>
<text transform="translate(198.4,189.4) rotate(-90)" font-size="4.2" fill="#2a6a7a" stroke="#2a6a7a" stroke-width="0.12">11</text>
<text x="195.4" y="221" font-size="4.2" fill="#2a2ab0" stroke="#2a2ab0" stroke-width="0" font-weight="bold">4</text>
<text transform="translate(191.20000000000002,183.2) rotate(-90)" font-size="7" fill="#17888c" stroke="#17888c" stroke-width="0.12" textLength="14.4" lengthAdjust="spacingAndGlyphs">-12V</text>
<text transform="translate(212.20000000000002,240.4) rotate(-90)" font-size="7" fill="#17888c" stroke="#17888c" stroke-width="0.12" textLength="16" lengthAdjust="spacingAndGlyphs">+12V</text>
<text x="142.4" y="206" font-size="7.3" fill="#17888c" stroke="#17888c" stroke-width="0.12" textLength="37.6" lengthAdjust="spacingAndGlyphs">OP1 LM324</text>
<line x1="343.4" y1="192.3" x2="343.4" y2="204.3" stroke="#3d9a3d" stroke-width="1" />
<line x1="340.2" y1="192.3" x2="346.59999999999997" y2="192.3" stroke="#3d9a3d" stroke-width="1" />
<line x1="343.4" y1="226.3" x2="343.4" y2="238.3" stroke="#3d9a3d" stroke-width="1" />
<line x1="340.2" y1="238.3" x2="346.59999999999997" y2="238.3" stroke="#3d9a3d" stroke-width="1" />
<line x1="327" y1="203.8" x2="332" y2="203.8" stroke="#755050" stroke-width="1.35" />
<line x1="327" y1="226.8" x2="332" y2="226.8" stroke="#755050" stroke-width="1.35" />
<rect x="325.70000000000005" y="202.9" width="1.8" height="1.8" fill="#e8302a"/>
<rect x="325.70000000000005" y="225.9" width="1.8" height="1.8" fill="#e8302a"/>
<line x1="365" y1="215.3" x2="371.6" y2="215.3" stroke="#755050" stroke-width="1.35" />
<rect x="370.5" y="214.4" width="1.8" height="1.8" fill="#e8302a"/>
<polygon points="332,198.60000000000002 332,232.0 365,215.3" fill="#fff" stroke="#1b1b73" stroke-width="2" stroke-linejoin="miter"/>
<line x1="334.6" y1="204.70000000000002" x2="337.4" y2="204.70000000000002" stroke="#3a8aa0" stroke-width="0.8" />
<line x1="334.4" y1="225.9" x2="337.6" y2="225.9" stroke="#3a8aa0" stroke-width="0.8" />
<line x1="336" y1="224.3" x2="336" y2="227.5" stroke="#3a8aa0" stroke-width="0.8" />
<line x1="341.6" y1="222.70000000000002" x2="344.8" y2="222.70000000000002" stroke="#3a8aa0" stroke-width="0.8" />
<line x1="343.2" y1="221.10000000000002" x2="343.2" y2="224.3" stroke="#3a8aa0" stroke-width="0.8" />
<text x="324.4" y="202.10000000000002" font-size="5" fill="#24249a" stroke="#24249a" stroke-width="0">2</text>
<text x="324.4" y="225.10000000000002" font-size="5" fill="#24249a" stroke="#24249a" stroke-width="0">3</text>
<text x="370.4" y="212.70000000000002" font-size="5" fill="#24249a" stroke="#24249a" stroke-width="0">1</text>
<text transform="translate(342,200.70000000000002) rotate(-90)" font-size="4.2" fill="#2a6a7a" stroke="#2a6a7a" stroke-width="0.12">11</text>
<text x="339" y="232.3" font-size="4.2" fill="#2a2ab0" stroke="#2a2ab0" stroke-width="0" font-weight="bold">4</text>
<text transform="translate(334.8,194.5) rotate(-90)" font-size="7" fill="#17888c" stroke="#17888c" stroke-width="0.12" textLength="14.4" lengthAdjust="spacingAndGlyphs">-12V</text>
<text transform="translate(355.8,251.70000000000002) rotate(-90)" font-size="7" fill="#17888c" stroke="#17888c" stroke-width="0.12" textLength="16" lengthAdjust="spacingAndGlyphs">+12V</text>
<text x="284.4" y="218.4" font-size="7.3" fill="#17888c" stroke="#17888c" stroke-width="0.12" textLength="37.6" lengthAdjust="spacingAndGlyphs">OP2 LM324</text>
<line x1="510.79999999999995" y1="204" x2="510.79999999999995" y2="216" stroke="#3d9a3d" stroke-width="1" />
<line x1="507.59999999999997" y1="204" x2="514.0" y2="204" stroke="#3d9a3d" stroke-width="1" />
<line x1="510.79999999999995" y1="238" x2="510.79999999999995" y2="250" stroke="#3d9a3d" stroke-width="1" />
<line x1="507.59999999999997" y1="250" x2="514.0" y2="250" stroke="#3d9a3d" stroke-width="1" />
<line x1="494.4" y1="215.5" x2="499.4" y2="215.5" stroke="#755050" stroke-width="1.35" />
<line x1="494.4" y1="238.5" x2="499.4" y2="238.5" stroke="#755050" stroke-width="1.35" />
<rect x="493.1" y="214.6" width="1.8" height="1.8" fill="#e8302a"/>
<rect x="493.1" y="237.6" width="1.8" height="1.8" fill="#e8302a"/>
<line x1="532.4" y1="227" x2="539.0" y2="227" stroke="#755050" stroke-width="1.35" />
<rect x="537.9" y="226.1" width="1.8" height="1.8" fill="#e8302a"/>
<polygon points="499.4,210.3 499.4,243.7 532.4,227" fill="#fff" stroke="#1b1b73" stroke-width="2" stroke-linejoin="miter"/>
<line x1="502.0" y1="216.4" x2="504.79999999999995" y2="216.4" stroke="#3a8aa0" stroke-width="0.8" />
<line x1="501.79999999999995" y1="237.6" x2="505.0" y2="237.6" stroke="#3a8aa0" stroke-width="0.8" />
<line x1="503.4" y1="236" x2="503.4" y2="239.2" stroke="#3a8aa0" stroke-width="0.8" />
<line x1="509.0" y1="234.4" x2="512.1999999999999" y2="234.4" stroke="#3a8aa0" stroke-width="0.8" />
<line x1="510.59999999999997" y1="232.8" x2="510.59999999999997" y2="236" stroke="#3a8aa0" stroke-width="0.8" />
<text x="491.79999999999995" y="213.8" font-size="5" fill="#24249a" stroke="#24249a" stroke-width="0">2</text>
<text x="491.79999999999995" y="236.8" font-size="5" fill="#24249a" stroke="#24249a" stroke-width="0">3</text>
<text x="537.8" y="224.4" font-size="5" fill="#24249a" stroke="#24249a" stroke-width="0">1</text>
<text transform="translate(509.4,212.4) rotate(-90)" font-size="4.2" fill="#2a6a7a" stroke="#2a6a7a" stroke-width="0.12">11</text>
<text x="506.4" y="244" font-size="4.2" fill="#2a2ab0" stroke="#2a2ab0" stroke-width="0" font-weight="bold">4</text>
<text transform="translate(502.2,206.2) rotate(-90)" font-size="7" fill="#17888c" stroke="#17888c" stroke-width="0.12" textLength="14.4" lengthAdjust="spacingAndGlyphs">-12V</text>
<text transform="translate(523.1999999999999,263.4) rotate(-90)" font-size="7" fill="#17888c" stroke="#17888c" stroke-width="0.12" textLength="16" lengthAdjust="spacingAndGlyphs">+12V</text>
<text x="453.4" y="228" font-size="7.3" fill="#17888c" stroke="#17888c" stroke-width="0.12" textLength="37.6" lengthAdjust="spacingAndGlyphs">OP3 LM324</text>
<rect x="164.4" y="154.6" width="64.0" height="9.599999999999994" fill="#fff" stroke="#3a3ae6" stroke-width="0.9" />
<text x="196.4" y="161.6" font-size="7.5" fill="#3a3ae6" stroke="#3a3ae6" stroke-width="0.2" text-anchor="middle" textLength="58.6" lengthAdjust="spacingAndGlyphs">Adder / Subtracter</text>
<rect x="326.6" y="157.4" width="35.39999999999998" height="10.0" fill="#fff" stroke="#3a3ae6" stroke-width="0.9" />
<text x="344.3" y="164.8" font-size="7.5" fill="#3a3ae6" stroke="#3a3ae6" stroke-width="0.2" text-anchor="middle" textLength="30.4" lengthAdjust="spacingAndGlyphs">Integrator</text>
<rect x="487" y="157.4" width="35.39999999999998" height="10.0" fill="#fff" stroke="#3a3ae6" stroke-width="0.9" />
<text x="504.7" y="164.8" font-size="7.5" fill="#3a3ae6" stroke="#3a3ae6" stroke-width="0.2" text-anchor="middle" textLength="30.4" lengthAdjust="spacingAndGlyphs">Integrator</text>
<circle cx="148" cy="146.4" r="1.6" fill="#1a0a0a"/>
<circle cx="148" cy="215.4" r="1.6" fill="#1a0a0a"/>
<circle cx="246" cy="146.4" r="1.6" fill="#1a0a0a"/>
<circle cx="246" cy="204" r="1.6" fill="#1a0a0a"/>
<circle cx="309" cy="204" r="1.6" fill="#1a0a0a"/>
<circle cx="395.4" cy="215.6" r="1.6" fill="#1a0a0a"/>
<circle cx="395.4" cy="273.4" r="1.6" fill="#1a0a0a"/>
<circle cx="464.6" cy="215.6" r="1.6" fill="#1a0a0a"/>
<circle cx="562" cy="146.4" r="1.6" fill="#1a0a0a"/>
<circle cx="562" cy="227" r="1.6" fill="#1a0a0a"/>
<path d="M246,146.4 h5.6 M254.8,143.2 l-3.2,3.2 l3.2,3.2" fill="none" stroke="#3d9a3d" stroke-width="0.9"/>
<text x="242.6" y="139.2" font-size="7.7" fill="#8e2a8e" stroke="#8e2a8e" stroke-width="0.12" textLength="24.4" lengthAdjust="spacingAndGlyphs">VoutHP</text>
<path d="M395.4,273.4 h5.4 M403.6,270 l-2.8,3.4 l2.8,3.2" fill="none" stroke="#3d9a3d" stroke-width="0.9"/>
<text x="396.6" y="268" font-size="7.7" fill="#8e2a8e" stroke="#8e2a8e" stroke-width="0.12" textLength="26.4" lengthAdjust="spacingAndGlyphs">Vout BP</text>
<path d="M562,227 h4.6 M569.4,224 q-3,3 0,6" fill="none" stroke="#3d9a3d" stroke-width="0.9"/>
<text x="573" y="230.4" font-size="7.7" fill="#8e2a8e" stroke="#8e2a8e" stroke-width="0.12" textLength="25" lengthAdjust="spacingAndGlyphs">Vout LP</text>
</g>
<g id="chart">
<rect x="149.6" y="298.2" width="394.79999999999995" height="242.8" fill="#fff" stroke="#5a5a5a" stroke-width="1" />
<line x1="545.0" y1="299.2" x2="545.0" y2="541.6" stroke="#bdbdbd" stroke-width="0.8" />
<line x1="200.6" y1="312.6" x2="521.0" y2="312.6" stroke="#d8d8d8" stroke-width="0.8" />
<line x1="521.0" y1="312.6" x2="521.0" y2="498.0" stroke="#d8d8d8" stroke-width="0.8" />
<line x1="219.89" y1="312.6" x2="219.89" y2="498.0" stroke="#bcbcbc" stroke-width="0.7" stroke-dasharray="1.2 2"/>
<line x1="231.17" y1="312.6" x2="231.17" y2="498.0" stroke="#bcbcbc" stroke-width="0.7" stroke-dasharray="1.2 2"/>
<line x1="239.18" y1="312.6" x2="239.18" y2="498.0" stroke="#bcbcbc" stroke-width="0.7" stroke-dasharray="1.2 2"/>
<line x1="245.39" y1="312.6" x2="245.39" y2="498.0" stroke="#bcbcbc" stroke-width="0.7" stroke-dasharray="1.2 2"/>
<line x1="250.46" y1="312.6" x2="250.46" y2="498.0" stroke="#bcbcbc" stroke-width="0.7" stroke-dasharray="1.2 2"/>
<line x1="254.75" y1="312.6" x2="254.75" y2="498.0" stroke="#bcbcbc" stroke-width="0.7" stroke-dasharray="1.2 2"/>
<line x1="258.47" y1="312.6" x2="258.47" y2="498.0" stroke="#bcbcbc" stroke-width="0.7" stroke-dasharray="1.2 2"/>
<line x1="261.75" y1="312.6" x2="261.75" y2="498.0" stroke="#bcbcbc" stroke-width="0.7" stroke-dasharray="1.2 2"/>
<line x1="264.68" y1="312.6" x2="264.68" y2="498.0" stroke="#bcbcbc" stroke-width="0.7" stroke-dasharray="1.2 2"/>
<line x1="283.97" y1="312.6" x2="283.97" y2="498.0" stroke="#bcbcbc" stroke-width="0.7" stroke-dasharray="1.2 2"/>
<line x1="295.25" y1="312.6" x2="295.25" y2="498.0" stroke="#bcbcbc" stroke-width="0.7" stroke-dasharray="1.2 2"/>
<line x1="303.26" y1="312.6" x2="303.26" y2="498.0" stroke="#bcbcbc" stroke-width="0.7" stroke-dasharray="1.2 2"/>
<line x1="309.47" y1="312.6" x2="309.47" y2="498.0" stroke="#bcbcbc" stroke-width="0.7" stroke-dasharray="1.2 2"/>
<line x1="314.54" y1="312.6" x2="314.54" y2="498.0" stroke="#bcbcbc" stroke-width="0.7" stroke-dasharray="1.2 2"/>
<line x1="318.83" y1="312.6" x2="318.83" y2="498.0" stroke="#bcbcbc" stroke-width="0.7" stroke-dasharray="1.2 2"/>
<line x1="322.55" y1="312.6" x2="322.55" y2="498.0" stroke="#bcbcbc" stroke-width="0.7" stroke-dasharray="1.2 2"/>
<line x1="325.83" y1="312.6" x2="325.83" y2="498.0" stroke="#bcbcbc" stroke-width="0.7" stroke-dasharray="1.2 2"/>
<line x1="328.76" y1="312.6" x2="328.76" y2="498.0" stroke="#bcbcbc" stroke-width="0.7" stroke-dasharray="1.2 2"/>
<line x1="348.05" y1="312.6" x2="348.05" y2="498.0" stroke="#bcbcbc" stroke-width="0.7" stroke-dasharray="1.2 2"/>
<line x1="359.33" y1="312.6" x2="359.33" y2="498.0" stroke="#bcbcbc" stroke-width="0.7" stroke-dasharray="1.2 2"/>
<line x1="367.34" y1="312.6" x2="367.34" y2="498.0" stroke="#bcbcbc" stroke-width="0.7" stroke-dasharray="1.2 2"/>
<line x1="373.55" y1="312.6" x2="373.55" y2="498.0" stroke="#bcbcbc" stroke-width="0.7" stroke-dasharray="1.2 2"/>
<line x1="378.62" y1="312.6" x2="378.62" y2="498.0" stroke="#bcbcbc" stroke-width="0.7" stroke-dasharray="1.2 2"/>
<line x1="382.91" y1="312.6" x2="382.91" y2="498.0" stroke="#bcbcbc" stroke-width="0.7" stroke-dasharray="1.2 2"/>
<line x1="386.63" y1="312.6" x2="386.63" y2="498.0" stroke="#bcbcbc" stroke-width="0.7" stroke-dasharray="1.2 2"/>
<line x1="389.91" y1="312.6" x2="389.91" y2="498.0" stroke="#bcbcbc" stroke-width="0.7" stroke-dasharray="1.2 2"/>
<line x1="392.84" y1="312.6" x2="392.84" y2="498.0" stroke="#bcbcbc" stroke-width="0.7" stroke-dasharray="1.2 2"/>
<line x1="412.13" y1="312.6" x2="412.13" y2="498.0" stroke="#bcbcbc" stroke-width="0.7" stroke-dasharray="1.2 2"/>
<line x1="423.41" y1="312.6" x2="423.41" y2="498.0" stroke="#bcbcbc" stroke-width="0.7" stroke-dasharray="1.2 2"/>
<line x1="431.42" y1="312.6" x2="431.42" y2="498.0" stroke="#bcbcbc" stroke-width="0.7" stroke-dasharray="1.2 2"/>
<line x1="437.63" y1="312.6" x2="437.63" y2="498.0" stroke="#bcbcbc" stroke-width="0.7" stroke-dasharray="1.2 2"/>
<line x1="442.7" y1="312.6" x2="442.7" y2="498.0" stroke="#bcbcbc" stroke-width="0.7" stroke-dasharray="1.2 2"/>
<line x1="446.99" y1="312.6" x2="446.99" y2="498.0" stroke="#bcbcbc" stroke-width="0.7" stroke-dasharray="1.2 2"/>
<line x1="450.71" y1="312.6" x2="450.71" y2="498.0" stroke="#bcbcbc" stroke-width="0.7" stroke-dasharray="1.2 2"/>
<line x1="453.99" y1="312.6" x2="453.99" y2="498.0" stroke="#bcbcbc" stroke-width="0.7" stroke-dasharray="1.2 2"/>
<line x1="456.92" y1="312.6" x2="456.92" y2="498.0" stroke="#bcbcbc" stroke-width="0.7" stroke-dasharray="1.2 2"/>
<line x1="476.21" y1="312.6" x2="476.21" y2="498.0" stroke="#bcbcbc" stroke-width="0.7" stroke-dasharray="1.2 2"/>
<line x1="487.49" y1="312.6" x2="487.49" y2="498.0" stroke="#bcbcbc" stroke-width="0.7" stroke-dasharray="1.2 2"/>
<line x1="495.5" y1="312.6" x2="495.5" y2="498.0" stroke="#bcbcbc" stroke-width="0.7" stroke-dasharray="1.2 2"/>
<line x1="501.71" y1="312.6" x2="501.71" y2="498.0" stroke="#bcbcbc" stroke-width="0.7" stroke-dasharray="1.2 2"/>
<line x1="506.78" y1="312.6" x2="506.78" y2="498.0" stroke="#bcbcbc" stroke-width="0.7" stroke-dasharray="1.2 2"/>
<line x1="511.07" y1="312.6" x2="511.07" y2="498.0" stroke="#bcbcbc" stroke-width="0.7" stroke-dasharray="1.2 2"/>
<line x1="514.79" y1="312.6" x2="514.79" y2="498.0" stroke="#bcbcbc" stroke-width="0.7" stroke-dasharray="1.2 2"/>
<line x1="518.07" y1="312.6" x2="518.07" y2="498.0" stroke="#bcbcbc" stroke-width="0.7" stroke-dasharray="1.2 2"/>
<line x1="200.6" y1="312.6" x2="521.0" y2="312.6" stroke="#bcbcbc" stroke-width="0.7" stroke-dasharray="1.2 2"/>
<line x1="200.6" y1="335.78" x2="521.0" y2="335.78" stroke="#bcbcbc" stroke-width="0.7" stroke-dasharray="1.2 2"/>
<line x1="200.6" y1="358.95" x2="521.0" y2="358.95" stroke="#bcbcbc" stroke-width="0.7" stroke-dasharray="1.2 2"/>
<line x1="200.6" y1="382.12" x2="521.0" y2="382.12" stroke="#bcbcbc" stroke-width="0.7" stroke-dasharray="1.2 2"/>
<line x1="200.6" y1="405.3" x2="521.0" y2="405.3" stroke="#bcbcbc" stroke-width="0.7" stroke-dasharray="1.2 2"/>
<line x1="200.6" y1="428.48" x2="521.0" y2="428.48" stroke="#bcbcbc" stroke-width="0.7" stroke-dasharray="1.2 2"/>
<line x1="200.6" y1="451.65" x2="521.0" y2="451.65" stroke="#bcbcbc" stroke-width="0.7" stroke-dasharray="1.2 2"/>
<line x1="200.6" y1="474.82" x2="521.0" y2="474.82" stroke="#bcbcbc" stroke-width="0.7" stroke-dasharray="1.2 2"/>
<line x1="200.6" y1="312.1" x2="200.6" y2="498.6" stroke="#444" stroke-width="1.25" />
<line x1="200.0" y1="498.2" x2="521.5" y2="498.2" stroke="#444" stroke-width="1.25" />
<line x1="194.79999999999998" y1="312.6" x2="200.6" y2="312.6" stroke="#3c3c3c" stroke-width="1" />
<line x1="197.79999999999998" y1="317.24" x2="200.6" y2="317.24" stroke="#3c3c3c" stroke-width="0.9" />
<line x1="197.79999999999998" y1="321.87" x2="200.6" y2="321.87" stroke="#3c3c3c" stroke-width="0.9" />
<line x1="197.79999999999998" y1="326.5" x2="200.6" y2="326.5" stroke="#3c3c3c" stroke-width="0.9" />
<line x1="197.79999999999998" y1="331.14" x2="200.6" y2="331.14" stroke="#3c3c3c" stroke-width="0.9" />
<line x1="194.79999999999998" y1="335.78" x2="200.6" y2="335.78" stroke="#3c3c3c" stroke-width="1" />
<line x1="197.79999999999998" y1="340.41" x2="200.6" y2="340.41" stroke="#3c3c3c" stroke-width="0.9" />
<line x1="197.79999999999998" y1="345.05" x2="200.6" y2="345.05" stroke="#3c3c3c" stroke-width="0.9" />
<line x1="197.79999999999998" y1="349.68" x2="200.6" y2="349.68" stroke="#3c3c3c" stroke-width="0.9" />
<line x1="197.79999999999998" y1="354.31" x2="200.6" y2="354.31" stroke="#3c3c3c" stroke-width="0.9" />
<line x1="194.79999999999998" y1="358.95" x2="200.6" y2="358.95" stroke="#3c3c3c" stroke-width="1" />
<line x1="197.79999999999998" y1="363.59" x2="200.6" y2="363.59" stroke="#3c3c3c" stroke-width="0.9" />
<line x1="197.79999999999998" y1="368.22" x2="200.6" y2="368.22" stroke="#3c3c3c" stroke-width="0.9" />
<line x1="197.79999999999998" y1="372.86" x2="200.6" y2="372.86" stroke="#3c3c3c" stroke-width="0.9" />
<line x1="197.79999999999998" y1="377.49" x2="200.6" y2="377.49" stroke="#3c3c3c" stroke-width="0.9" />
<line x1="194.79999999999998" y1="382.12" x2="200.6" y2="382.12" stroke="#3c3c3c" stroke-width="1" />
<line x1="197.79999999999998" y1="386.76" x2="200.6" y2="386.76" stroke="#3c3c3c" stroke-width="0.9" />
<line x1="197.79999999999998" y1="391.39" x2="200.6" y2="391.39" stroke="#3c3c3c" stroke-width="0.9" />
<line x1="197.79999999999998" y1="396.03" x2="200.6" y2="396.03" stroke="#3c3c3c" stroke-width="0.9" />
<line x1="197.79999999999998" y1="400.67" x2="200.6" y2="400.67" stroke="#3c3c3c" stroke-width="0.9" />
<line x1="194.79999999999998" y1="405.3" x2="200.6" y2="405.3" stroke="#3c3c3c" stroke-width="1" />
<line x1="197.79999999999998" y1="409.94" x2="200.6" y2="409.94" stroke="#3c3c3c" stroke-width="0.9" />
<line x1="197.79999999999998" y1="414.57" x2="200.6" y2="414.57" stroke="#3c3c3c" stroke-width="0.9" />
<line x1="197.79999999999998" y1="419.21" x2="200.6" y2="419.21" stroke="#3c3c3c" stroke-width="0.9" />
<line x1="197.79999999999998" y1="423.84" x2="200.6" y2="423.84" stroke="#3c3c3c" stroke-width="0.9" />
<line x1="194.79999999999998" y1="428.48" x2="200.6" y2="428.48" stroke="#3c3c3c" stroke-width="1" />
<line x1="197.79999999999998" y1="433.11" x2="200.6" y2="433.11" stroke="#3c3c3c" stroke-width="0.9" />
<line x1="197.79999999999998" y1="437.75" x2="200.6" y2="437.75" stroke="#3c3c3c" stroke-width="0.9" />
<line x1="197.79999999999998" y1="442.38" x2="200.6" y2="442.38" stroke="#3c3c3c" stroke-width="0.9" />
<line x1="197.79999999999998" y1="447.01" x2="200.6" y2="447.01" stroke="#3c3c3c" stroke-width="0.9" />
<line x1="194.79999999999998" y1="451.65" x2="200.6" y2="451.65" stroke="#3c3c3c" stroke-width="1" />
<line x1="197.79999999999998" y1="456.29" x2="200.6" y2="456.29" stroke="#3c3c3c" stroke-width="0.9" />
<line x1="197.79999999999998" y1="460.92" x2="200.6" y2="460.92" stroke="#3c3c3c" stroke-width="0.9" />
<line x1="197.79999999999998" y1="465.56" x2="200.6" y2="465.56" stroke="#3c3c3c" stroke-width="0.9" />
<line x1="197.79999999999998" y1="470.19" x2="200.6" y2="470.19" stroke="#3c3c3c" stroke-width="0.9" />
<line x1="194.79999999999998" y1="474.82" x2="200.6" y2="474.82" stroke="#3c3c3c" stroke-width="1" />
<line x1="197.79999999999998" y1="479.46" x2="200.6" y2="479.46" stroke="#3c3c3c" stroke-width="0.9" />
<line x1="197.79999999999998" y1="484.1" x2="200.6" y2="484.1" stroke="#3c3c3c" stroke-width="0.9" />
<line x1="197.79999999999998" y1="488.73" x2="200.6" y2="488.73" stroke="#3c3c3c" stroke-width="0.9" />
<line x1="197.79999999999998" y1="493.37" x2="200.6" y2="493.37" stroke="#3c3c3c" stroke-width="0.9" />
<line x1="194.79999999999998" y1="498.0" x2="200.6" y2="498.0" stroke="#3c3c3c" stroke-width="1" />
<text x="193.2" y="315.9" font-size="9" fill="#222" stroke="#222" stroke-width="0" text-anchor="end" font-style="italic">80.00</text>
<text x="193.2" y="339.08" font-size="9" fill="#222" stroke="#222" stroke-width="0" text-anchor="end" font-style="italic">60.00</text>
<text x="193.2" y="362.25" font-size="9" fill="#222" stroke="#222" stroke-width="0" text-anchor="end" font-style="italic">40.00</text>
<text x="193.2" y="385.43" font-size="9" fill="#222" stroke="#222" stroke-width="0" text-anchor="end" font-style="italic">20.00</text>
<text x="193.2" y="408.6" font-size="9" fill="#222" stroke="#222" stroke-width="0" text-anchor="end" font-style="italic">0.00</text>
<text x="193.2" y="431.78" font-size="9" fill="#222" stroke="#222" stroke-width="0" text-anchor="end" font-style="italic">-20.00</text>
<text x="193.2" y="454.95" font-size="9" fill="#222" stroke="#222" stroke-width="0" text-anchor="end" font-style="italic">-40.00</text>
<text x="193.2" y="478.12" font-size="9" fill="#222" stroke="#222" stroke-width="0" text-anchor="end" font-style="italic">-60.00</text>
<text x="193.2" y="501.3" font-size="9" fill="#222" stroke="#222" stroke-width="0" text-anchor="end" font-style="italic">-80.00</text>
<line x1="200.6" y1="498.0" x2="200.6" y2="504.0" stroke="#3c3c3c" stroke-width="1" />
<line x1="219.89" y1="498.0" x2="219.89" y2="501.0" stroke="#3c3c3c" stroke-width="0.9" />
<line x1="231.17" y1="498.0" x2="231.17" y2="501.0" stroke="#3c3c3c" stroke-width="0.9" />
<line x1="239.18" y1="498.0" x2="239.18" y2="501.0" stroke="#3c3c3c" stroke-width="0.9" />
<line x1="245.39" y1="498.0" x2="245.39" y2="501.0" stroke="#3c3c3c" stroke-width="0.9" />
<line x1="250.46" y1="498.0" x2="250.46" y2="501.0" stroke="#3c3c3c" stroke-width="0.9" />
<line x1="254.75" y1="498.0" x2="254.75" y2="501.0" stroke="#3c3c3c" stroke-width="0.9" />
<line x1="258.47" y1="498.0" x2="258.47" y2="501.0" stroke="#3c3c3c" stroke-width="0.9" />
<line x1="261.75" y1="498.0" x2="261.75" y2="501.0" stroke="#3c3c3c" stroke-width="0.9" />
<line x1="264.68" y1="498.0" x2="264.68" y2="504.0" stroke="#3c3c3c" stroke-width="1" />
<line x1="283.97" y1="498.0" x2="283.97" y2="501.0" stroke="#3c3c3c" stroke-width="0.9" />
<line x1="295.25" y1="498.0" x2="295.25" y2="501.0" stroke="#3c3c3c" stroke-width="0.9" />
<line x1="303.26" y1="498.0" x2="303.26" y2="501.0" stroke="#3c3c3c" stroke-width="0.9" />
<line x1="309.47" y1="498.0" x2="309.47" y2="501.0" stroke="#3c3c3c" stroke-width="0.9" />
<line x1="314.54" y1="498.0" x2="314.54" y2="501.0" stroke="#3c3c3c" stroke-width="0.9" />
<line x1="318.83" y1="498.0" x2="318.83" y2="501.0" stroke="#3c3c3c" stroke-width="0.9" />
<line x1="322.55" y1="498.0" x2="322.55" y2="501.0" stroke="#3c3c3c" stroke-width="0.9" />
<line x1="325.83" y1="498.0" x2="325.83" y2="501.0" stroke="#3c3c3c" stroke-width="0.9" />
<line x1="328.76" y1="498.0" x2="328.76" y2="504.0" stroke="#3c3c3c" stroke-width="1" />
<line x1="348.05" y1="498.0" x2="348.05" y2="501.0" stroke="#3c3c3c" stroke-width="0.9" />
<line x1="359.33" y1="498.0" x2="359.33" y2="501.0" stroke="#3c3c3c" stroke-width="0.9" />
<line x1="367.34" y1="498.0" x2="367.34" y2="501.0" stroke="#3c3c3c" stroke-width="0.9" />
<line x1="373.55" y1="498.0" x2="373.55" y2="501.0" stroke="#3c3c3c" stroke-width="0.9" />
<line x1="378.62" y1="498.0" x2="378.62" y2="501.0" stroke="#3c3c3c" stroke-width="0.9" />
<line x1="382.91" y1="498.0" x2="382.91" y2="501.0" stroke="#3c3c3c" stroke-width="0.9" />
<line x1="386.63" y1="498.0" x2="386.63" y2="501.0" stroke="#3c3c3c" stroke-width="0.9" />
<line x1="389.91" y1="498.0" x2="389.91" y2="501.0" stroke="#3c3c3c" stroke-width="0.9" />
<line x1="392.84" y1="498.0" x2="392.84" y2="504.0" stroke="#3c3c3c" stroke-width="1" />
<line x1="412.13" y1="498.0" x2="412.13" y2="501.0" stroke="#3c3c3c" stroke-width="0.9" />
<line x1="423.41" y1="498.0" x2="423.41" y2="501.0" stroke="#3c3c3c" stroke-width="0.9" />
<line x1="431.42" y1="498.0" x2="431.42" y2="501.0" stroke="#3c3c3c" stroke-width="0.9" />
<line x1="437.63" y1="498.0" x2="437.63" y2="501.0" stroke="#3c3c3c" stroke-width="0.9" />
<line x1="442.7" y1="498.0" x2="442.7" y2="501.0" stroke="#3c3c3c" stroke-width="0.9" />
<line x1="446.99" y1="498.0" x2="446.99" y2="501.0" stroke="#3c3c3c" stroke-width="0.9" />
<line x1="450.71" y1="498.0" x2="450.71" y2="501.0" stroke="#3c3c3c" stroke-width="0.9" />
<line x1="453.99" y1="498.0" x2="453.99" y2="501.0" stroke="#3c3c3c" stroke-width="0.9" />
<line x1="456.92" y1="498.0" x2="456.92" y2="504.0" stroke="#3c3c3c" stroke-width="1" />
<line x1="476.21" y1="498.0" x2="476.21" y2="501.0" stroke="#3c3c3c" stroke-width="0.9" />
<line x1="487.49" y1="498.0" x2="487.49" y2="501.0" stroke="#3c3c3c" stroke-width="0.9" />
<line x1="495.5" y1="498.0" x2="495.5" y2="501.0" stroke="#3c3c3c" stroke-width="0.9" />
<line x1="501.71" y1="498.0" x2="501.71" y2="501.0" stroke="#3c3c3c" stroke-width="0.9" />
<line x1="506.78" y1="498.0" x2="506.78" y2="501.0" stroke="#3c3c3c" stroke-width="0.9" />
<line x1="511.07" y1="498.0" x2="511.07" y2="501.0" stroke="#3c3c3c" stroke-width="0.9" />
<line x1="514.79" y1="498.0" x2="514.79" y2="501.0" stroke="#3c3c3c" stroke-width="0.9" />
<line x1="518.07" y1="498.0" x2="518.07" y2="501.0" stroke="#3c3c3c" stroke-width="0.9" />
<line x1="521.0" y1="498.0" x2="521.0" y2="504.0" stroke="#3c3c3c" stroke-width="1" />
<text x="196.6" y="515.4" font-size="8.6" fill="#222" stroke="#222" stroke-width="0" font-style="italic">10</text>
<text x="260.68" y="515.4" font-size="8.6" fill="#222" stroke="#222" stroke-width="0" font-style="italic">100</text>
<text x="324.76" y="515.4" font-size="8.6" fill="#222" stroke="#222" stroke-width="0" font-style="italic">1k</text>
<text x="388.84" y="515.4" font-size="8.6" fill="#222" stroke="#222" stroke-width="0" font-style="italic">10k</text>
<text x="452.92" y="515.4" font-size="8.6" fill="#222" stroke="#222" stroke-width="0" font-style="italic">100k</text>
<text x="517.0" y="515.4" font-size="8.6" fill="#222" stroke="#222" stroke-width="0" font-style="italic">1MEG</text>
<text x="340" y="528.6" font-size="9" fill="#222" stroke="#222" stroke-width="0" textLength="64" lengthAdjust="spacingAndGlyphs">Frequency (Hz)</text>
<text transform="translate(160.8,422.8) rotate(-90)" font-size="9" fill="#222" stroke="#222" stroke-width="0.12" textLength="39.4" lengthAdjust="spacingAndGlyphs">Gain (dB)</text>
<rect x="241.4" y="301" width="93.6" height="10" fill="#fff" stroke="#3a3ae6" stroke-width="0.9" />
<text x="288.2" y="308.2" font-size="7" fill="#3a3ae6" stroke="#3a3ae6" stroke-width="0.22" text-anchor="middle" textLength="88.4" lengthAdjust="spacingAndGlyphs">Low Pass Transfer Function</text>
<path d="M200.60,399.27 L201.13,399.27 L201.67,399.27 L202.20,399.27 L202.74,399.27 L203.27,399.27 L203.80,399.27 L204.34,399.27 L204.87,399.27 L205.41,399.27 L205.94,399.27 L206.47,399.27 L207.01,399.27 L207.54,399.27 L208.08,399.27 L208.61,399.27 L209.14,399.27 L209.68,399.27 L210.21,399.27 L210.75,399.27 L211.28,399.27 L211.81,399.27 L212.35,399.27 L212.88,399.27 L213.42,399.27 L213.95,399.27 L214.48,399.27 L215.02,399.27 L215.55,399.27 L216.09,399.27 L216.62,399.27 L217.15,399.27 L217.69,399.27 L218.22,399.27 L218.76,399.27 L219.29,399.27 L219.82,399.27 L220.36,399.27 L220.89,399.27 L221.43,399.27 L221.96,399.27 L222.49,399.27 L223.03,399.27 L223.56,399.27 L224.10,399.27 L224.63,399.27 L225.16,399.27 L225.70,399.27 L226.23,399.27 L226.77,399.27 L227.30,399.27 L227.83,399.27 L228.37,399.27 L228.90,399.27 L229.44,399.27 L229.97,399.27 L230.50,399.27 L231.04,399.27 L231.57,399.27 L232.11,399.26 L232.64,399.26 L233.17,399.26 L233.71,399.26 L234.24,399.26 L234.78,399.26 L235.31,399.26 L235.84,399.26 L236.38,399.26 L236.91,399.26 L237.45,399.26 L237.98,399.26 L238.51,399.26 L239.05,399.26 L239.58,399.26 L240.12,399.26 L240.65,399.26 L241.18,399.26 L241.72,399.26 L242.25,399.25 L242.79,399.25 L243.32,399.25 L243.85,399.25 L244.39,399.25 L244.92,399.25 L245.46,399.25 L245.99,399.25 L246.52,399.25 L247.06,399.25 L247.59,399.25 L248.13,399.24 L248.66,399.24 L249.19,399.24 L249.73,399.24 L250.26,399.24 L250.80,399.24 L251.33,399.24 L251.86,399.23 L252.40,399.23 L252.93,399.23 L253.47,399.23 L254.00,399.23 L254.53,399.23 L255.07,399.22 L255.60,399.22 L256.14,399.22 L256.67,399.22 L257.20,399.22 L257.74,399.21 L258.27,399.21 L258.81,399.21 L259.34,399.21 L259.87,399.20 L260.41,399.20 L260.94,399.20 L261.48,399.19 L262.01,399.19 L262.54,399.19 L263.08,399.18 L263.61,399.18 L264.15,399.18 L264.68,399.17 L265.21,399.17 L265.75,399.17 L266.28,399.16 L266.82,399.16 L267.35,399.15 L267.88,399.15 L268.42,399.14 L268.95,399.14 L269.49,399.13 L270.02,399.13 L270.55,399.12 L271.09,399.11 L271.62,399.11 L272.16,399.10 L272.69,399.09 L273.22,399.09 L273.76,399.08 L274.29,399.07 L274.83,399.06 L275.36,399.06 L275.89,399.05 L276.43,399.04 L276.96,399.03 L277.50,399.02 L278.03,399.01 L278.56,399.00 L279.10,398.99 L279.63,398.98 L280.17,398.96 L280.70,398.95 L281.23,398.94 L281.77,398.93 L282.30,398.91 L282.84,398.90 L283.37,398.88 L283.90,398.87 L284.44,398.85 L284.97,398.83 L285.51,398.82 L286.04,398.80 L286.57,398.78 L287.11,398.76 L287.64,398.74 L288.18,398.72 L288.71,398.69 L289.24,398.67 L289.78,398.65 L290.31,398.62 L290.85,398.60 L291.38,398.57 L291.91,398.54 L292.45,398.51 L292.98,398.48 L293.52,398.45 L294.05,398.41 L294.58,398.38 L295.12,398.34 L295.65,398.30 L296.19,398.26 L296.72,398.22 L297.25,398.18 L297.79,398.13 L298.32,398.08 L298.86,398.03 L299.39,397.98 L299.92,397.93 L300.46,397.87 L300.99,397.81 L301.53,397.75 L302.06,397.69 L302.59,397.62 L303.13,397.55 L303.66,397.47 L304.20,397.40 L304.73,397.31 L305.26,397.23 L305.80,397.14 L306.33,397.05 L306.87,396.95 L307.40,396.85 L307.93,396.74 L308.47,396.63 L309.00,396.51 L309.54,396.38 L310.07,396.25 L310.60,396.11 L311.14,395.97 L311.67,395.81 L312.21,395.65 L312.74,395.48 L313.27,395.30 L313.81,395.10 L314.34,394.90 L314.88,394.68 L315.41,394.45 L315.94,394.21 L316.48,393.95 L317.01,393.67 L317.55,393.38 L318.08,393.06 L318.61,392.72 L319.15,392.36 L319.68,391.96 L320.22,391.54 L320.75,391.08 L321.28,390.58 L321.82,390.03 L322.35,389.43 L322.89,388.77 L323.42,388.04 L323.95,387.22 L324.49,386.31 L325.02,385.27 L325.56,384.09 L326.09,382.73 L326.62,381.17 L327.16,379.39 L327.69,377.48 L328.23,375.80 L328.76,375.17 L329.29,376.19 L329.83,378.25 L330.36,380.55 L330.90,382.71 L331.43,384.66 L331.96,386.41 L332.50,387.97 L333.03,389.40 L333.57,390.70 L334.10,391.90 L334.63,393.02 L335.17,394.07 L335.70,395.05 L336.24,395.99 L336.77,396.87 L337.30,397.72 L337.84,398.53 L338.37,399.31 L338.91,400.06 L339.44,400.79 L339.97,401.49 L340.51,402.17 L341.04,402.83 L341.58,403.48 L342.11,404.11 L342.64,404.73 L343.18,405.33 L343.71,405.92 L344.25,406.50 L344.78,407.06 L345.31,407.62 L345.85,408.17 L346.38,408.71 L346.92,409.24 L347.45,409.77 L347.98,410.29 L348.52,410.80 L349.05,411.30 L349.59,411.80 L350.12,412.30 L350.65,412.79 L351.19,413.27 L351.72,413.75 L352.26,414.22 L352.79,414.70 L353.32,415.16 L353.86,415.63 L354.39,416.09 L354.93,416.54 L355.46,417.00 L355.99,417.45 L356.53,417.90 L357.06,418.34 L357.60,418.78 L358.13,419.23 L358.66,419.66 L359.20,420.10 L359.73,420.53 L360.27,420.96 L360.80,421.39 L361.33,421.82 L361.87,422.25 L362.40,422.67 L362.94,423.10 L363.47,423.52 L364.00,423.94 L364.54,424.36 L365.07,424.77 L365.61,425.19 L366.14,425.61 L366.67,426.02 L367.21,426.43 L367.74,426.84 L368.28,427.25 L368.81,427.66 L369.34,428.07 L369.88,428.48 L370.41,428.89 L370.95,429.29 L371.48,429.70 L372.00,430.09 L372.95,430.81 L373.81,431.48 L374.65,432.13 L375.50,432.78 L376.41,433.47 L377.44,434.23 L378.62,435.09 L380.00,436.08 L381.62,437.23 L383.46,438.51 L385.46,439.89 L387.56,441.33 L389.72,442.82 L391.88,444.32 L393.99,445.79 L396.00,447.20 L397.92,448.57 L399.82,449.94 L401.70,451.29 L403.56,452.65 L405.42,454.01 L407.27,455.37 L409.13,456.73 L411.00,458.10 L412.91,459.51 L414.87,460.96 L416.84,462.44 L418.81,463.91 L420.74,465.34 L422.60,466.72 L424.36,468.02 L426.00,469.20 L427.50,470.27 L428.90,471.27 L430.20,472.19 L431.44,473.04 L432.62,473.84 L433.76,474.60 L434.88,475.31 L436.00,476.00 L437.10,476.65 L438.14,477.26 L439.15,477.82 L440.12,478.34 L441.09,478.81 L442.05,479.25 L443.01,479.64 L444.00,480.00 L445.01,480.31 L446.02,480.58 L447.04,480.80 L448.06,480.99 L449.07,481.14 L450.07,481.25 L451.05,481.34 L452.00,481.40 L452.92,481.43 L453.82,481.42 L454.70,481.38 L455.56,481.31 L456.42,481.22 L457.27,481.10 L458.13,480.96 L459.00,480.80 L459.85,480.63 L460.68,480.43 L461.49,480.21 L462.31,479.96 L463.16,479.70 L464.04,479.42 L464.98,479.12 L466.00,478.80 L467.11,478.46 L468.29,478.09 L469.53,477.70 L470.81,477.29 L472.12,476.87 L473.43,476.44 L474.73,476.02 L476.00,475.60 L477.25,475.18 L478.50,474.75 L479.75,474.32 L481.00,473.89 L482.25,473.45 L483.50,473.03 L484.75,472.61 L486.00,472.20 L487.25,471.80 L488.50,471.40 L489.75,471.00 L491.00,470.61 L492.25,470.23 L493.50,469.87 L494.75,469.52 L496.00,469.20 L497.26,468.89 L498.55,468.60 L499.84,468.32 L501.12,468.06 L502.40,467.82 L503.64,467.59 L504.85,467.39 L506.00,467.20 L507.10,467.04 L508.16,466.90 L509.19,466.79 L510.19,466.69 L511.16,466.61 L512.12,466.54 L513.06,466.47 L514.00,466.40 L514.91,466.34 L515.77,466.29 L516.61,466.24 L517.44,466.21 L518.27,466.18 L519.13,466.15 L520.04,466.12" fill="none" stroke="#861820" stroke-width="1.9" stroke-linejoin="round" stroke-linecap="round"/>
</g>
<g id="bottom">
<rect x="9.5" y="543.6" width="597.5" height="32" fill="#f0f0f0" stroke="none" stroke-width="1" />
<rect x="62.6" y="544.2" width="150" height="7" fill="#cbcbcb" stroke="none" stroke-width="1" />
<path d="M15,545.6 l-2.6,2 l2.6,2" fill="none" stroke="#333" stroke-width="0.9"/>
<rect x="10.5" y="551.4" width="55.6" height="10.2" fill="#f7f7f7" stroke="none" stroke-width="1" />
<line x1="66.2" y1="551.4" x2="66.2" y2="561.8" stroke="#6e6e6e" stroke-width="1" />
<line x1="10.5" y1="561.8" x2="66.7" y2="561.8" stroke="#6e6e6e" stroke-width="1" />
<text x="14.3" y="559.2" font-size="6.6" fill="#222" stroke="#222" stroke-width="0" textLength="47.5" lengthAdjust="spacingAndGlyphs">state variable filterr</text>
<line x1="9.5" y1="563" x2="607" y2="563" stroke="#d6d6d6" stroke-width="0.8" />
<line x1="9.5" y1="564" x2="607" y2="564" stroke="#fbfbfb" stroke-width="0.8" />
<rect x="12.2" y="564.6" width="12.6" height="11" fill="#f4f4f4" stroke="#8a8a8a" stroke-width="0.8" />
<circle cx="18" cy="570.4" r="3.6" fill="none" stroke="#222" stroke-width="1"/>
<path d="M15.4,568 l5.2,4.8 M20.6,568 l-5.2,4.8" stroke="#222" stroke-width="0.7"/>
<rect x="22.4" y="566.6" width="1.6" height="7" fill="#222" stroke="none" stroke-width="1" />
<text x="31" y="573" font-size="6.4" fill="#222" stroke="#222" stroke-width="0" textLength="9" lengthAdjust="spacingAndGlyphs">Exit</text>
<line x1="41.4" y1="564.6" x2="41.4" y2="575" stroke="#8a8a8a" stroke-width="0.9" />
<line x1="44" y1="564.6" x2="44" y2="575" stroke="#9a9a9a" stroke-width="0.9" />
<text x="430.6" y="567.4" font-size="21" fill="#8fcc8a" stroke="#8fcc8a" stroke-width="0" textLength="165.4" lengthAdjust="spacingAndGlyphs" fill-opacity="0.72">www.cntronics.com</text>
</g>
</svg>
</body></html>
